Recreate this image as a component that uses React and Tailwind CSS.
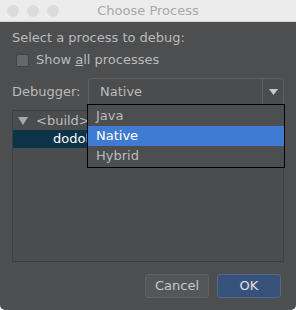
import React from "react";

const font = { fontFamily: '"DejaVu Sans", "Liberation Sans", sans-serif' };

function TrafficLights() {
  return (
    <div className="flex gap-[8px] pl-[7px]">
      <span className="w-[12px] h-[12px] rounded-full bg-[#dcdcdc]" />
      <span className="w-[12px] h-[12px] rounded-full bg-[#dcdcdc]" />
      <span className="w-[12px] h-[12px] rounded-full bg-[#dcdcdc]" />
    </div>
  );
}

export default function App() {
  return (
    <div
      className="w-[296px] h-[310px] bg-[#4c4e50] flex flex-col text-[13px] text-[#bbbbbb] overflow-hidden rounded-b-[5px]"
      style={font}
    >
      <div className="h-[22px] bg-[#ececec] border-b border-[#d4d4d4] relative flex items-center">
        <TrafficLights />
        <div className="absolute inset-0 flex items-center justify-center text-[#a8a8a8] text-[13px]">
          Choose Process
        </div>
      </div>

      <div className="flex flex-col px-[12px] pt-[7px] flex-1">
        <div className="h-[18px] leading-[18px]">Select a process to debug:</div>
        <label className="flex items-center gap-[7px] pl-[4px] mt-[4px] h-[18px]">
          <span className="w-[13px] h-[13px] rounded-[2px] bg-[#65686a] border border-[#404244]" />
          <span>
            Show <span className="underline">a</span>ll processes
          </span>
        </label>

        <div className="flex items-center mt-[9px] h-[27px]">
          <span className="w-[76px]">Debugger:</span>
          <div className="relative flex-1 h-[27px]">
            <div className="h-full flex items-center border border-[#5e6163] rounded-[3px] bg-[#4a4c4e]">
              <span className="flex-1 pl-[11px] text-[#bbbbbb]">Native</span>
              <span className="w-[21px] h-full border-l border-[#5e6163] flex items-center justify-center">
                <svg width="9" height="6" viewBox="0 0 9 6">
                  <path d="M0 0 H9 L4.5 6 Z" fill="#c8c8c8" />
                </svg>
              </span>
            </div>
            <div className="absolute left-[-1px] right-[-1px] top-[26px] bg-[#4c4e50] border border-black flex flex-col z-10 py-[1px]">
              <div className="h-[20px] leading-[20px] pl-[8px]">Java</div>
              <div className="h-[20px] leading-[20px] pl-[8px] bg-[#3f7bd1] text-white">Native</div>
              <div className="h-[20px] leading-[20px] pl-[8px]">Hybrid</div>
            </div>
          </div>
        </div>

        <div className="mt-[5px] h-[152px] border border-[#3c3e40] bg-[#4a4c4e] flex flex-col">
          <div className="h-[19px] flex items-center pl-[5px] gap-[8px]">
            <svg width="10" height="8" viewBox="0 0 10 8">
              <path d="M0 0 H10 L5 8 Z" fill="#a8a8a8" />
            </svg>
            <span className="text-[#bbbbbb]">&lt;build&gt;</span>
          </div>
          <div className="h-[18px] flex items-center bg-[#0d3349]">
            <div className="w-[75px] overflow-hidden whitespace-nowrap pl-[40px] text-white">dodola</div>
          </div>
        </div>

        <div className="flex justify-end gap-[8px] mt-[12px] pr-[3px]">
          <button className="w-[64px] h-[24px] rounded-[3px] border border-[#5f6264] bg-[#54575a] text-[#c8c8c8]">
            Cancel
          </button>
          <button className="w-[64px] h-[24px] rounded-[3px] border border-[#52688a] bg-[#37527a] text-[#e0e0e0]">
            OK
          </button>
        </div>
      </div>
    </div>
  );
}
